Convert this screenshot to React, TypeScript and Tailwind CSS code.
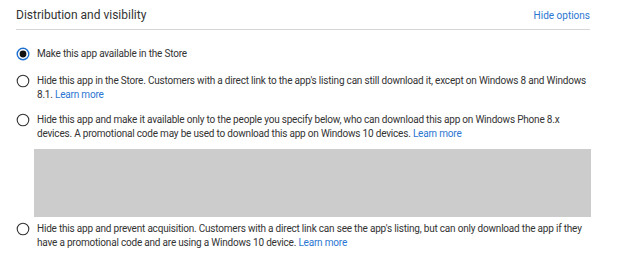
import React from 'react';

// Segoe-ish stack; only installed families are reachable here.
const FONT = "font-['Roboto',_'Lato',_sans-serif]";

function Radio({ checked }: { checked?: boolean }) {
  return (
    <svg width="14" height="14" viewBox="0 0 14 14" className="shrink-0">
      {checked ? (
        <>
          <circle cx="7" cy="7" r="5.8" fill="white" stroke="#1c6fd1" strokeWidth="1.4" />
          <circle cx="7" cy="7" r="3.4" fill="#111" />
        </>
      ) : (
        <circle cx="7" cy="7" r="5.8" fill="white" stroke="#333" strokeWidth="1.1" />
      )}
    </svg>
  );
}

function LearnMore() {
  return <a className="text-[#2a76d2] cursor-pointer">Learn more</a>;
}

function Option({
  checked,
  children,
}: {
  checked?: boolean;
  children: React.ReactNode;
}) {
  return (
    <label className="flex items-start gap-[7px]">
      <span>
        <Radio checked={checked} />
      </span>
      <span className="text-[10px] leading-[14px] tracking-[-0.2px] text-[#333] whitespace-nowrap">
        {children}
      </span>
    </label>
  );
}

export default function App() {
  return (
    <div className={`w-[624px] h-[256px] bg-white overflow-hidden pl-4 pr-[34px] ${FONT}`}>
      <header className="flex items-center justify-between h-[30px] border-b border-[#d6d6d6]">
        <h2 className="text-[12px] text-[#333] pt-[1px]">Distribution and visibility</h2>
        <a className="text-[10px] text-[#2a76d2] pt-[1px] cursor-pointer">Hide options</a>
      </header>

      <div className="flex flex-col pt-[17px]">
        <Option checked>Make this app available in the Store</Option>

        <div className="mt-[13px]">
          <Option>
            Hide this app in the Store. Customers with a direct link to the app&apos;s listing can
            still download it, except on Windows 8 and Windows
            <br />
            8.1. <LearnMore />
          </Option>
        </div>

        <div className="mt-[11px]">
          <Option>
            Hide this app and make it available only to the people you specify below, who can
            download this app on Windows Phone 8.x
            <br />
            devices. A promotional code may be used to download this app on Windows 10 devices.{' '}
            <LearnMore />
          </Option>
        </div>

        <div className="ml-[18px] mt-[8px] h-[68px] w-[557px] bg-[#cccccc]" />

        <div className="mt-[5px]">
          <Option>
            Hide this app and prevent acquisition. Customers with a direct link can see the
            app&apos;s listing, but can only download the app if they
            <br />
            have a promotional code and are using a Windows 10 device. <LearnMore />
          </Option>
        </div>
      </div>
    </div>
  );
}
